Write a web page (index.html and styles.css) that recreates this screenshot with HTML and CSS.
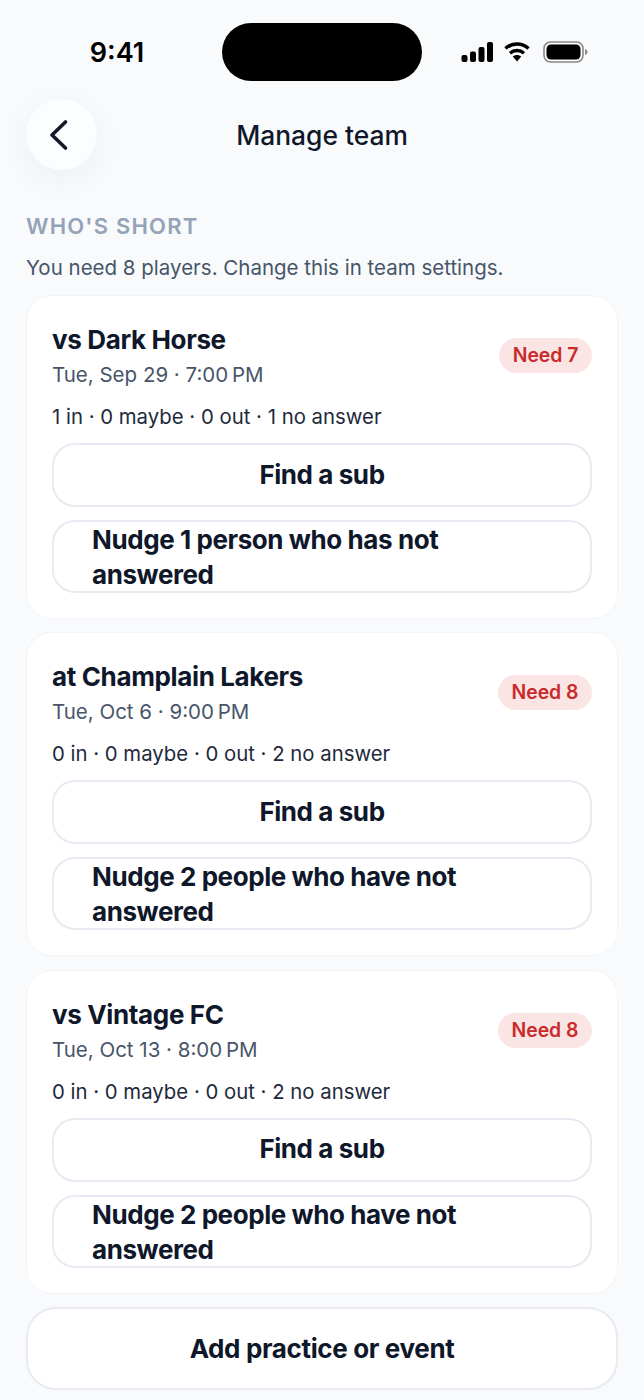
FILE: index.html
```html
<!DOCTYPE html>
<html lang="en">
  <head>
    <meta charset="UTF-8" />
    <meta name="viewport" content="width=device-width, initial-scale=1.0" />
    <title>Manage team</title>
    <link rel="stylesheet" href="styles.css">
  </head>

  <body>
    <div class="status-bar">
      <span class="time">9:41</span>
      <div class="island"></div>
      <div class="status-icons">
        <svg class="signal" width="32" height="20" viewBox="0 0 32 20">
          <rect x="0.5" y="13" width="6" height="7" rx="2" />
          <rect x="9" y="9.5" width="6" height="10.5" rx="2" />
          <rect x="17.5" y="5" width="6" height="15" rx="2" />
          <rect x="26" y="0" width="6" height="20" rx="2" />
        </svg>
        <svg class="wifi" width="26" height="20" viewBox="0 0 26 20">
          <path d="M1.5 6.5C8 0.5 18 0.5 24.5 6.5" />
          <path d="M6 11.2C10 7.6 16 7.6 20 11.2" />
          <path class="wifi-dot" d="M8.8 14.6C11.2 12.6 14.8 12.6 17.2 14.6L13 19.6Z" />
        </svg>
        <svg class="battery" width="45" height="22" viewBox="0 0 45 22">
          <rect x="1" y="1" width="39" height="20" rx="6.5" class="battery-shell" />
          <rect x="3.5" y="3.5" width="34" height="15" rx="4.5" />
          <path class="battery-cap" d="M42 8C43.500 8.500 44.500 9.700 44.500 11C44.500 12.300 43.500 13.500 42 14Z" />
        </svg>
      </div>
    </div>

    <div class="nav-bar">
      <button class="back-button">
        <svg width="24" height="32" viewBox="0 0 24 32">
          <path d="M18.500 3L5 16L18.500 29" />
        </svg>
      </button>
      <p class="nav-title">Manage team</p>
    </div>

    <main class="content">
      <p class="section-label">WHO'S SHORT</p>
      <p class="section-note">You need 8 players. Change this in team settings.</p>

      <div class="card">
        <div class="card-head">
          <div>
            <p class="game-title">vs Dark Horse</p>
            <p class="game-time">Tue, Sep 29 · 7:00&#8239;PM</p>
          </div>
          <span class="need-badge">Need 7</span>
        </div>
        <p class="game-counts">1 in · 0 maybe · 0 out · 1 no answer</p>
        <button class="action-button">Find a sub</button>
        <button class="action-button nudge-button">Nudge 1 person who has not answered</button>
      </div>

      <div class="card">
        <div class="card-head">
          <div>
            <p class="game-title">at Champlain Lakers</p>
            <p class="game-time">Tue, Oct 6 · 9:00&#8239;PM</p>
          </div>
          <span class="need-badge">Need 8</span>
        </div>
        <p class="game-counts">0 in · 0 maybe · 0 out · 2 no answer</p>
        <button class="action-button">Find a sub</button>
        <button class="action-button nudge-button">Nudge 2 people who have not answered</button>
      </div>

      <div class="card">
        <div class="card-head">
          <div>
            <p class="game-title">vs Vintage FC</p>
            <p class="game-time">Tue, Oct 13 · 8:00&#8239;PM</p>
          </div>
          <span class="need-badge">Need 8</span>
        </div>
        <p class="game-counts">0 in · 0 maybe · 0 out · 2 no answer</p>
        <button class="action-button">Find a sub</button>
        <button class="action-button nudge-button">Nudge 2 people who have not answered</button>
      </div>

      <button class="add-button">Add practice or event</button>
    </main>
  </body>
</html>
```

FILE: styles.css
```css
body{
  margin: 0;
  height: 1400px;
  overflow: hidden;
  background-color: #f8fafc;
  color: #0f172a;
  font-family: Inter, "Liberation Sans", sans-serif;
}

p{
  margin: 0;
}

button{
  font-family: inherit;
  color: inherit;
  cursor: pointer;
}

.status-bar{
  display: flex;
  align-items: center;
  height: 58px;
  padding-top: 23px;
  padding-bottom: 1px;
}

.time{
  width: 90px;
  margin-left: 72px;
  margin-right: 60px;
  text-align: center;
  font-size: 27px;
  font-weight: 600;
  color: #000;
}

.island{
  width: 200px;
  height: 58px;
  border-radius: 29px;
  background-color: #000;
}

.status-icons{
  display: flex;
  align-items: center;
  gap: 11px;
  margin-left: 39px;
}

.wifi{
  margin-right: 2px;
}

.wifi path{
  fill: none;
  stroke: #000;
  stroke-width: 3.4;
}

.wifi .wifi-dot{
  fill: #000;
  stroke: none;
}

.battery-shell{
  fill: none;
  stroke: #8a8a8a;
  stroke-width: 1.6;
}

.battery-cap{
  fill: #8a8a8a;
}

.nav-bar{
  display: flex;
  align-items: center;
  height: 71px;
  margin-top: 17px;
  padding-left: 26px;
}

.back-button{
  display: flex;
  align-items: center;
  justify-content: center;
  flex: none;
  width: 71px;
  height: 71px;
  padding: 0 5px 0 0;
  border: none;
  border-radius: 50%;
  background-color: #fcfdfe;
  box-shadow: 0 8px 36px rgba(15, 23, 42, 0.05);
}

.back-button path{
  fill: none;
  stroke: #111827;
  stroke-width: 3.6;
  stroke-linecap: round;
  stroke-linejoin: round;
}

.nav-title{
  width: 450px;
  text-align: center;
  font-size: 26.4px;
  font-weight: 500;
}

.content{
  padding: 42px 26px 0;
}

.section-label{
  font-size: 22px;
  line-height: 28px;
  font-weight: 600;
  letter-spacing: 1.2px;
  color: #94a3b8;
}

.section-note{
  margin-top: 14px;
  margin-bottom: 13px;
  font-size: 20.5px;
  line-height: 28px;
  color: #475569;
}

.card{
  box-sizing: border-box;
  height: 324px;
  margin-bottom: 13.3px;
  padding: 26px 25px;
  background-color: #fff;
  border: 1px solid #f1f5f9;
  border-radius: 26px;
}

.card-head{
  display: flex;
  align-items: center;
  justify-content: space-between;
}

.game-title{
  font-size: 26px;
  line-height: 35px;
  font-weight: 650;
  letter-spacing: -0.36px;
}

.game-time{
  margin-top: 1px;
  font-size: 20.5px;
  line-height: 33px;
  color: #475569;
}

.need-badge{
  height: 35px;
  padding: 0 13.5px;
  margin-top: -2px;
  line-height: 35px;
  border-radius: 18px;
  background-color: #fbe4e4;
  color: #c92a2a;
  font-size: 19.4px;
  font-weight: 600;
}

.game-counts{
  margin-top: 11px;
  margin-bottom: 11px;
  font-size: 20.35px;
  line-height: 30px;
  color: #1e293b;
}

.action-button{
  display: block;
  box-sizing: border-box;
  width: 100%;
  height: 64px;
  margin-bottom: 13px;
  padding: 0 38px 2px;
  background-color: #fff;
  border: 2px solid #e7ebf1;
  border-radius: 23px;
  font-size: 26px;
  line-height: 35px;
  font-weight: 650;
  letter-spacing: -0.42px;
}

.nudge-button{
  height: 73px;
  margin-bottom: 0;
  padding-bottom: 0;
  text-align: left;
}

.add-button{
  display: block;
  box-sizing: border-box;
  width: 100%;
  height: 83px;
  padding: 1px 0 0;
  background-color: #fff;
  border: 2px solid #e7ebf1;
  border-radius: 30px;
  font-size: 26px;
  font-weight: 650;
  letter-spacing: -0.36px;
}
```
